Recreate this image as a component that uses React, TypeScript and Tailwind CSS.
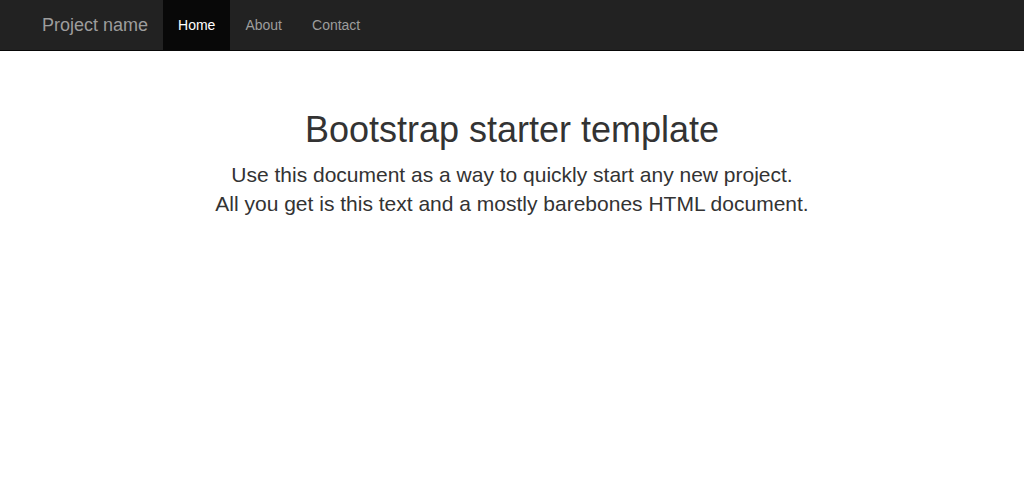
export default function App() {
  return (
    <div className="min-h-[504px] bg-white text-[#333] font-['Liberation_Sans',Arial,sans-serif] text-[14px] leading-[20px]">
      <nav className="h-[51px] bg-[#222] border-b border-[#080808]">
        <div className="w-[970px] mx-auto px-[15px] flex">
          <a className="-ml-[15px] px-[15px] py-[15px] h-[50px] text-[18px] leading-[20px] text-[#9d9d9d]">Project name</a>
          <ul className="flex">
            <li><a className="block px-[15px] py-[15px] leading-[20px] bg-[#080808] text-white">Home</a></li>
            <li><a className="block px-[15px] py-[15px] leading-[20px] text-[#9d9d9d]">About</a></li>
            <li><a className="block px-[15px] py-[15px] leading-[20px] text-[#9d9d9d]">Contact</a></li>
          </ul>
        </div>
      </nav>
      <div className="w-[970px] mx-auto px-[15px]">
        <div className="pt-[39px] pb-[40px] px-[15px] text-center">
          <h1 className="mt-[20px] mb-[10px] text-[36px] leading-[1.1] font-medium">Bootstrap starter template</h1>
          <p className="mb-[20px] text-[21px] leading-[1.4] font-light">
            Use this document as a way to quickly start any new project.<br />
            All you get is this text and a mostly barebones HTML document.
          </p>
        </div>
      </div>
    </div>
  );
}
